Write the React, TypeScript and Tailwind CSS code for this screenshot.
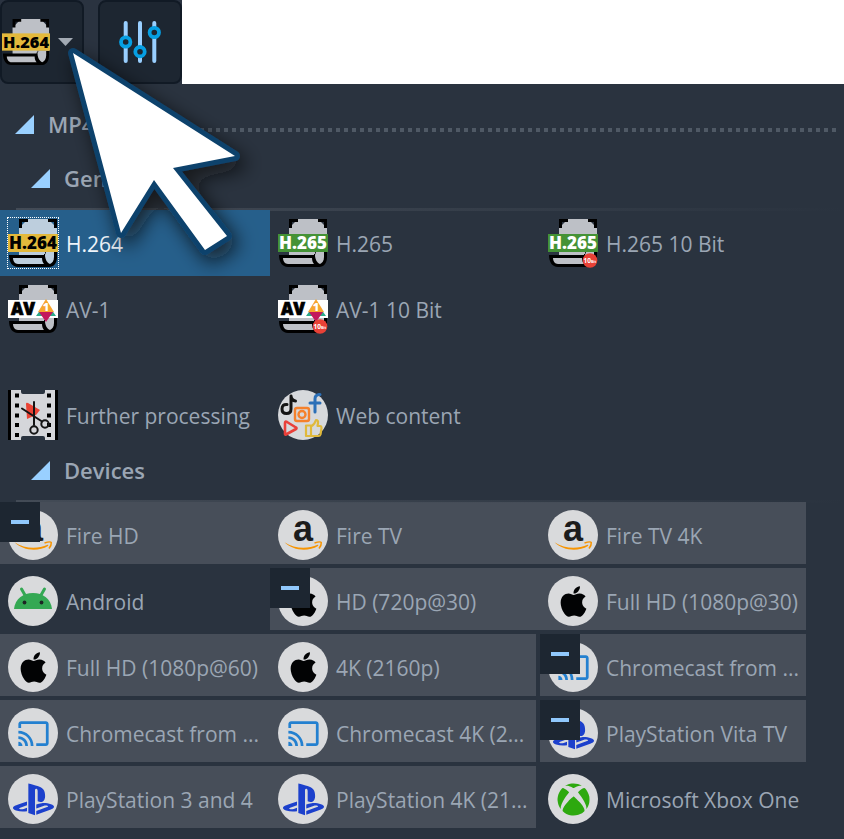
import { useState, type ReactNode } from 'react';
import { FaApple, FaPlaystation, FaXbox } from 'react-icons/fa';
import { MdCast } from 'react-icons/md';

type Codec = 'H.264' | 'H.265' | 'AV1';

function CodecIcon({ codec, tenBit, size = 50 }: { codec: Codec; tenBit?: boolean; size?: number }) {
  const band = { 'H.264': '#e3b93c', 'H.265': '#449236', AV1: '#ffffff' }[codec];
  const paper = size === 50 && codec === 'H.264' ? '#bdcedd' : '#bdc0c6';

  return (
    <svg width={size} height={size} viewBox="0 0 50 50" className="shrink-0" aria-hidden="true">
      <path d="M20 1H40L43 4L46 7L49 10V38H11V10L14 7L17 4Z" fill={paper} />
      <path d="M11 1H20V4H14V10H11ZM40 1H49V10H46V4H40Z" fill="#000" />
      <path d="M1 37H36V34H49V39C49 45 46 49 41 49H10C4 49 1 44 1 37Z" fill="#000" />
      <path d="M14 34H37V36H14ZM5 40H34C34 43 35 45 36 46H10C7 46 5 43 5 40Z" fill={paper} />
      <path d="M38 34H46V39C46 43 44 45 42 46C39 45 37 41 37 37Z" fill={paper} />
      <rect y="16" width="50" height="18" fill={band} />
      {codec === 'AV1' ? (
        <>
          <text x="3" y="31" fontSize="17" fontWeight="800" fontFamily="Open Sans, sans-serif" fill="#000" stroke="#000" strokeWidth="0.7">AV</text>
          <path d="M28 32L33 25L38 32L43 25L48 32Z" fill="#2ba98a" />
          <path d="M38 15L46 28H30Z" fill="#f7a52f" />
          <path d="M31 28H45L38 38Z" fill="#c3195d" />
          <text x="38" y="27" textAnchor="middle" fontSize="11" fontWeight="800" fontFamily="Open Sans, sans-serif" fill="#fff">1</text>
        </>
      ) : (
        <text x="25" y="31" textAnchor="middle" fontSize="17" fontWeight="800" fontFamily="Open Sans, sans-serif" fill={codec === 'H.264' ? '#000' : '#fff'}>
          {codec}
        </text>
      )}
      {tenBit && (
        <>
          <circle cx="42" cy="42.5" r="7.3" fill="#e84136" />
          <text x="35.500" y="45" fontSize="6.500" fontWeight="700" fontFamily="Open Sans, sans-serif" fill="#fff">
            10<tspan fontSize="3.6">Bit</tspan>
          </text>
        </>
      )}
    </svg>
  );
}

function FilmIcon() {
  const holes = [3.5, 13.5, 23.5, 33, 43];
  return (
    <svg width="50" height="50" viewBox="0 0 50 50" className="shrink-0" aria-hidden="true">
      <path d="M0 0H4V50H0ZM46 0H50V50H46Z" fill="#000" />
      <path d="M3 0H13V2Q13 4 15 4H35Q37 4 37 2V0H47V50H37V48Q37 46 35 46H15Q13 46 13 48V50H3Z" fill="#d5d6da" />
      {holes.map((y) => (
        <path key={y} d={`M7 ${y}h4v4h-4zM39 ${y}h4v4h-4z`} fill="#000" />
      ))}
      <path d="M18 14Q18 12 20 13L32 20L28 25L19 29Z" fill="#ea4335" />
      <g fill="none" stroke="#141414" strokeWidth="2" strokeLinecap="round">
        <path d="M14 18.500L34 31.500M26 12V35" />
        <circle cx="37" cy="34" r="3.700" />
        <circle cx="26" cy="40" r="3.700" />
      </g>
    </svg>
  );
}

function WebIcon() {
  return (
    <svg width="50" height="50" viewBox="0 0 50 50" className="shrink-0" fill="none" strokeLinecap="round" strokeLinejoin="round" aria-hidden="true">
      <circle cx="25" cy="25" r="25" fill="#d7d9dc" />
      <path d="M9 14.500Q4 14 4 19Q4 23.500 8.500 23.500Q13 23.500 13 19V7M13 6Q13.500 10.500 17.500 11" stroke="#151515" strokeWidth="3" />
      <path d="M42 4.500H41Q37 5 37 9V22M32 13H42" stroke="#2b6fb7" strokeWidth="3" />
      <rect x="17" y="18" width="14" height="13" rx="2" stroke="#f5812c" strokeWidth="2.400" />
      <circle cx="24" cy="24.500" r="3.500" stroke="#f5812c" strokeWidth="2.400" />
      <path d="M7 33V44Q7 45 8 44.500L18 39Q19 38 18 37.500L9 32Q7 31 7 33Z" stroke="#e9403a" strokeWidth="2.600" />
      <path d="M28 35.500H33V46H28ZM33 36.500Q37 34 38 30Q40.500 30 40 33L39.500 36H42Q43.500 36 43.500 38L42.500 44.500Q42 46 40.500 46H33" stroke="#e0b93c" strokeWidth="2.200" />
    </svg>
  );
}

function AmazonIcon() {
  return (
    <svg width="50" height="50" viewBox="0 0 50 50" className="overflow-visible" aria-hidden="true">
      <text x="25" y="31" textAnchor="middle" fontSize="36" fontWeight="700" fontFamily="Liberation Sans, sans-serif" fill="#1c1c1c">a</text>
      <path d="M6.500 32.300C17 39.200 30 39.200 39.500 34.800Q41 34.500 40 36C30 42 15 40.800 6.500 32.300Z" fill="#f79400" />
      <path d="M36.500 33Q42.500 31 43.300 32.500Q43.600 35 41 38.500" fill="none" stroke="#f79400" strokeWidth="1.500" />
    </svg>
  );
}

function AndroidIcon() {
  return (
    <svg width="50" height="50" viewBox="0 0 50 50" aria-hidden="true">
      <path d="M6 33C7 23 15 17 25 17S43 23 44 33Z" fill="#34a853" />
      <path d="M13.500 13L17.500 20M36.500 13L32.500 20" stroke="#34a853" strokeWidth="3" strokeLinecap="round" />
      <circle cx="16.500" cy="26.500" r="1.900" fill="#1d2524" />
      <circle cx="33.500" cy="26.500" r="1.900" fill="#1d2524" />
    </svg>
  );
}

function Disc({ children }: { children: ReactNode }) {
  return (
    <span className="flex size-[50px] shrink-0 items-center justify-center rounded-full bg-[#d9dadc]">
      {children}
    </span>
  );
}

const amazon = <Disc><AmazonIcon /></Disc>;
const android = <Disc><AndroidIcon /></Disc>;
const apple = <Disc><FaApple size={35} color="#020304" /></Disc>;
const cast = <Disc><MdCast size={33} color="#2380d0" /></Disc>;
const playstation = <Disc><FaPlaystation size={41} color="#1c40cc" /></Disc>;
const xbox = <Disc><FaXbox size={33} color="#2da90f" /></Disc>;

type Item = {
  id: string;
  label: string;
  icon: ReactNode;
  // position of the tile inside an expanded device group
  group?: 'start' | 'middle' | 'end';
};

const codecs: Item[] = [
  { id: 'h264', label: 'H.264', icon: <CodecIcon codec="H.264" /> },
  { id: 'h265', label: 'H.265', icon: <CodecIcon codec="H.265" /> },
  { id: 'h265-10', label: 'H.265 10 Bit', icon: <CodecIcon codec="H.265" tenBit /> },
  { id: 'av1', label: 'AV-1', icon: <CodecIcon codec="AV1" /> },
  { id: 'av1-10', label: 'AV-1 10 Bit', icon: <CodecIcon codec="AV1" tenBit /> },
];

const extras: Item[] = [
  { id: 'further', label: 'Further processing', icon: <FilmIcon /> },
  { id: 'web', label: 'Web content', icon: <WebIcon /> },
];

const devices: Item[] = [
  { id: 'fire-hd', label: 'Fire HD', icon: amazon, group: 'start' },
  { id: 'fire-tv', label: 'Fire TV', icon: amazon, group: 'middle' },
  { id: 'fire-4k', label: 'Fire TV 4K', icon: amazon, group: 'end' },
  { id: 'android', label: 'Android', icon: android },
  { id: 'apple-hd', label: 'HD (720p@30)', icon: apple, group: 'start' },
  { id: 'apple-fhd30', label: 'Full HD (1080p@30)', icon: apple, group: 'end' },
  { id: 'apple-fhd60', label: 'Full HD (1080p@60)', icon: apple, group: 'middle' },
  { id: 'apple-4k', label: '4K (2160p)', icon: apple, group: 'end' },
  { id: 'cast-1', label: 'Chromecast from ...', icon: cast, group: 'start' },
  { id: 'cast-2', label: 'Chromecast from ...', icon: cast, group: 'middle' },
  { id: 'cast-4k', label: 'Chromecast 4K (2...', icon: cast, group: 'end' },
  { id: 'ps-vita', label: 'PlayStation Vita TV', icon: playstation, group: 'start' },
  { id: 'ps-34', label: 'PlayStation 3 and 4', icon: playstation, group: 'middle' },
  { id: 'ps-4k', label: 'PlayStation 4K (21...', icon: playstation, group: 'end' },
  { id: 'xbox', label: 'Microsoft Xbox One', icon: xbox },
];

// a group that starts in the last column closes at the row's edge
const endsRow = (item: Item, index: number) => item.group === 'end' || index % 3 === 2;

function Triangle() {
  return (
    <svg width="19" height="19" viewBox="0 0 19 19" className="shrink-0" aria-hidden="true">
      <path d="M19 0V19H0Z" fill="#99d0ff" />
    </svg>
  );
}

function SubHeader({ title }: { title: string }) {
  return (
    <div className="relative h-[54px]">
      <button className="flex h-11 items-center gap-[14px] pl-[31px] pt-px text-[22px] font-semibold text-[#9ba6b4]">
        <Triangle />
        {title}
      </button>
      <div className="absolute -bottom-px left-4 right-0 h-[3px] bg-linear-to-r from-[#434b56] to-transparent" />
    </div>
  );
}

function Tiles({ items, selected, onSelect }: { items: Item[]; selected: string; onSelect: (id: string) => void }) {
  return (
    <div className="grid grid-cols-[repeat(auto-fill,270px)]">
      {items.map((item, i) => {
        const active = item.id === selected;
        let look = 'h-[62px] text-[#9ba6b4]';
        if (active) look = 'h-full bg-[#265f8b] text-[#eef4fa]';
        else if (item.group) look = 'h-[62px] bg-[#474e59] text-[#9ba6b4]';
        return (
          <div key={item.id} className={`h-[66px] ${item.group && endsRow(item, i) ? 'pr-1' : ''} ${active || item.group === 'start' ? 'relative' : ''}`}>
            <button onClick={() => onSelect(item.id)} className={`flex w-full items-start gap-2 pt-2 pl-2 text-left ${look}`}>
              <span className={active ? 'outline-1 outline-dotted outline-white' : ''}>{item.icon}</span>
              <span className="whitespace-nowrap leading-[52px]">{item.label}</span>
            </button>
            {item.group === 'start' && (
              <button aria-label="Collapse group" className="absolute left-0 top-0 flex size-10 items-center justify-center bg-[#1d2631]">
                <span className="h-1 w-[18px] bg-[#90c8fc]" />
              </button>
            )}
          </div>
        );
      })}
    </div>
  );
}

function Cursor() {
  const shape = 'M73 53L235 156L173 168L227 236L205 250L154 180L121 233Z';
  return (
    <svg width="290" height="310" viewBox="0 0 290 310" className="pointer-events-none absolute left-0 top-0 z-20" aria-hidden="true">
      <defs>
        <filter id="cursor-shadow" x="-30%" y="-30%" width="170%" height="170%">
          <feDropShadow dx="6" dy="8" stdDeviation="10" floodColor="#0b1017" floodOpacity="0.75" />
        </filter>
      </defs>
      <path d={shape} fill="#10436c" stroke="#10436c" strokeWidth="10" strokeLinejoin="round" filter="url(#cursor-shadow)" />
      <path d={shape} fill="#fff" />
    </svg>
  );
}

export default function App() {
  const [selected, setSelected] = useState('h264');

  return (
    <div className="relative min-h-screen bg-white font-['Open_Sans',sans-serif] text-[21px]">
      <header className="flex w-fit gap-[14px] bg-[#2a3340]">
        <button aria-label="Output format" className="flex size-[84px] items-center gap-2 rounded-lg border-2 border-[#111a25] bg-[#1d2631]">
          <CodecIcon codec="H.264" size={48} />
          <svg width="15" height="8" viewBox="0 0 15 8" aria-hidden="true">
            <path d="M0 0H15L7.500 8Z" fill="#a4abb4" />
          </svg>
        </button>
        <button aria-label="Settings" className="flex size-[84px] items-center justify-center rounded-lg border-2 border-[#111a25] bg-[#1d2631]">
          <svg width="42" height="42" viewBox="0 0 42 42" aria-hidden="true">
            <path d="M6.700 2V40M21 2V40M35.300 2V40" stroke="#99cfff" strokeWidth="4" strokeLinecap="round" />
            <g fill="#1d2631" stroke="#069fe3" strokeWidth="3.800">
              <circle cx="6.700" cy="21" r="4.700" />
              <circle cx="21" cy="30.700" r="4.700" />
              <circle cx="35.300" cy="11.500" r="4.700" />
            </g>
          </svg>
        </button>
      </header>

      <main className="min-h-[calc(100vh-84px)] bg-[#2a333f] pt-[18px]">
        <div className="flex h-[54px] items-start">
          <button className="flex h-11 items-center gap-[14px] pl-[15px] pt-px text-[22px] font-semibold text-[#9ba6b4]">
            <Triangle />
            MP4
          </button>
          <div className="mt-[26px] mr-2 ml-3 h-1 flex-1 bg-[repeating-linear-gradient(to_left,#4f5965_0_4px,transparent_4px_8px)]" />
        </div>

        <SubHeader title="General" />
        <Tiles items={codecs} selected={selected} onSelect={setSelected} />
        <div className="pt-10">
          <Tiles items={extras} selected={selected} onSelect={setSelected} />
        </div>

        <SubHeader title="Devices" />
        <Tiles items={devices} selected={selected} onSelect={setSelected} />
      </main>

      <Cursor />
    </div>
  );
}
